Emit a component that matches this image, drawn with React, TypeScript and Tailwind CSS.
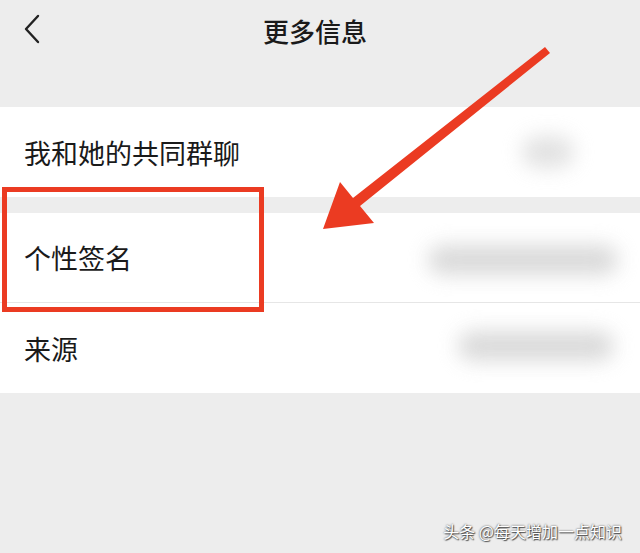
import type { ReactNode } from "react";

const cjk = "font-['Noto_Sans_CJK_SC','Noto_Sans',sans-serif]";

function Row({
  label,
  children,
  divider,
}: {
  label: string;
  children?: ReactNode;
  divider?: boolean;
}) {
  return (
    <div
      className={`flex h-[90px] items-center justify-between bg-white pl-6 ${
        divider ? "border-b border-[#e6e6e6]" : ""
      }`}
    >
      <span className="text-[27px] leading-none text-[#1a1a1a]">{label}</span>
      {children}
    </div>
  );
}

// blurred value on the right side of a row
function Smudge({ className }: { className: string }) {
  return <div className={`rounded-full bg-[#d6d6d6] blur-[10px] ${className}`} />;
}

export default function App() {
  return (
    <div className={`relative flex h-[553px] w-[640px] flex-col overflow-hidden bg-[#ededed] ${cjk}`}>
      <header className="flex h-[62px] items-center px-[22px]">
        <svg width="20" height="30" viewBox="0 0 20 30" fill="none" className="-mt-1">
          <path d="M16 2 L4 15 L16 28" stroke="#222" strokeWidth="2.4" strokeLinecap="round" strokeLinejoin="round" />
        </svg>
        <h1 className="flex-1 pr-[30px] text-center text-[26px] font-medium leading-none text-[#1a1a1a]">
          更多信息
        </h1>
      </header>

      <div className="mt-[45px]">
        <Row label="我和她的共同群聊">
          <Smudge className="mr-[66px] h-[32px] w-[52px] opacity-70" />
        </Row>
      </div>

      <div className="mt-4">
        <Row label="个性签名" divider>
          <Smudge className="mr-[22px] mt-1 h-[30px] w-[190px] opacity-90" />
        </Row>
        <Row label="来源">
          <Smudge className="mr-[26px] -mt-1 h-[30px] w-[156px] opacity-90" />
        </Row>
      </div>

      <div className="flex flex-1 items-end justify-end pb-[14px] pr-[18px]">
        <span className="text-[16px] leading-none text-white [text-shadow:0_0_2px_rgba(0,0,0,0.75),1px_1px_1px_rgba(0,0,0,0.6)]">
          头条 @每天增加一点知识
        </span>
      </div>

      {/* highlight box */}
      <div className="absolute left-[2px] top-[187px] h-[125px] w-[262px] border-[5px] border-[#eb3b22]" />

      {/* pointer arrow */}
      <svg className="absolute left-0 top-0" width="640" height="553" viewBox="0 0 640 553">
        <polygon points="545,47 550,53 360,206 374,223 323,229 340,182 353,198" fill="#eb3b22" />
      </svg>
    </div>
  );
}
